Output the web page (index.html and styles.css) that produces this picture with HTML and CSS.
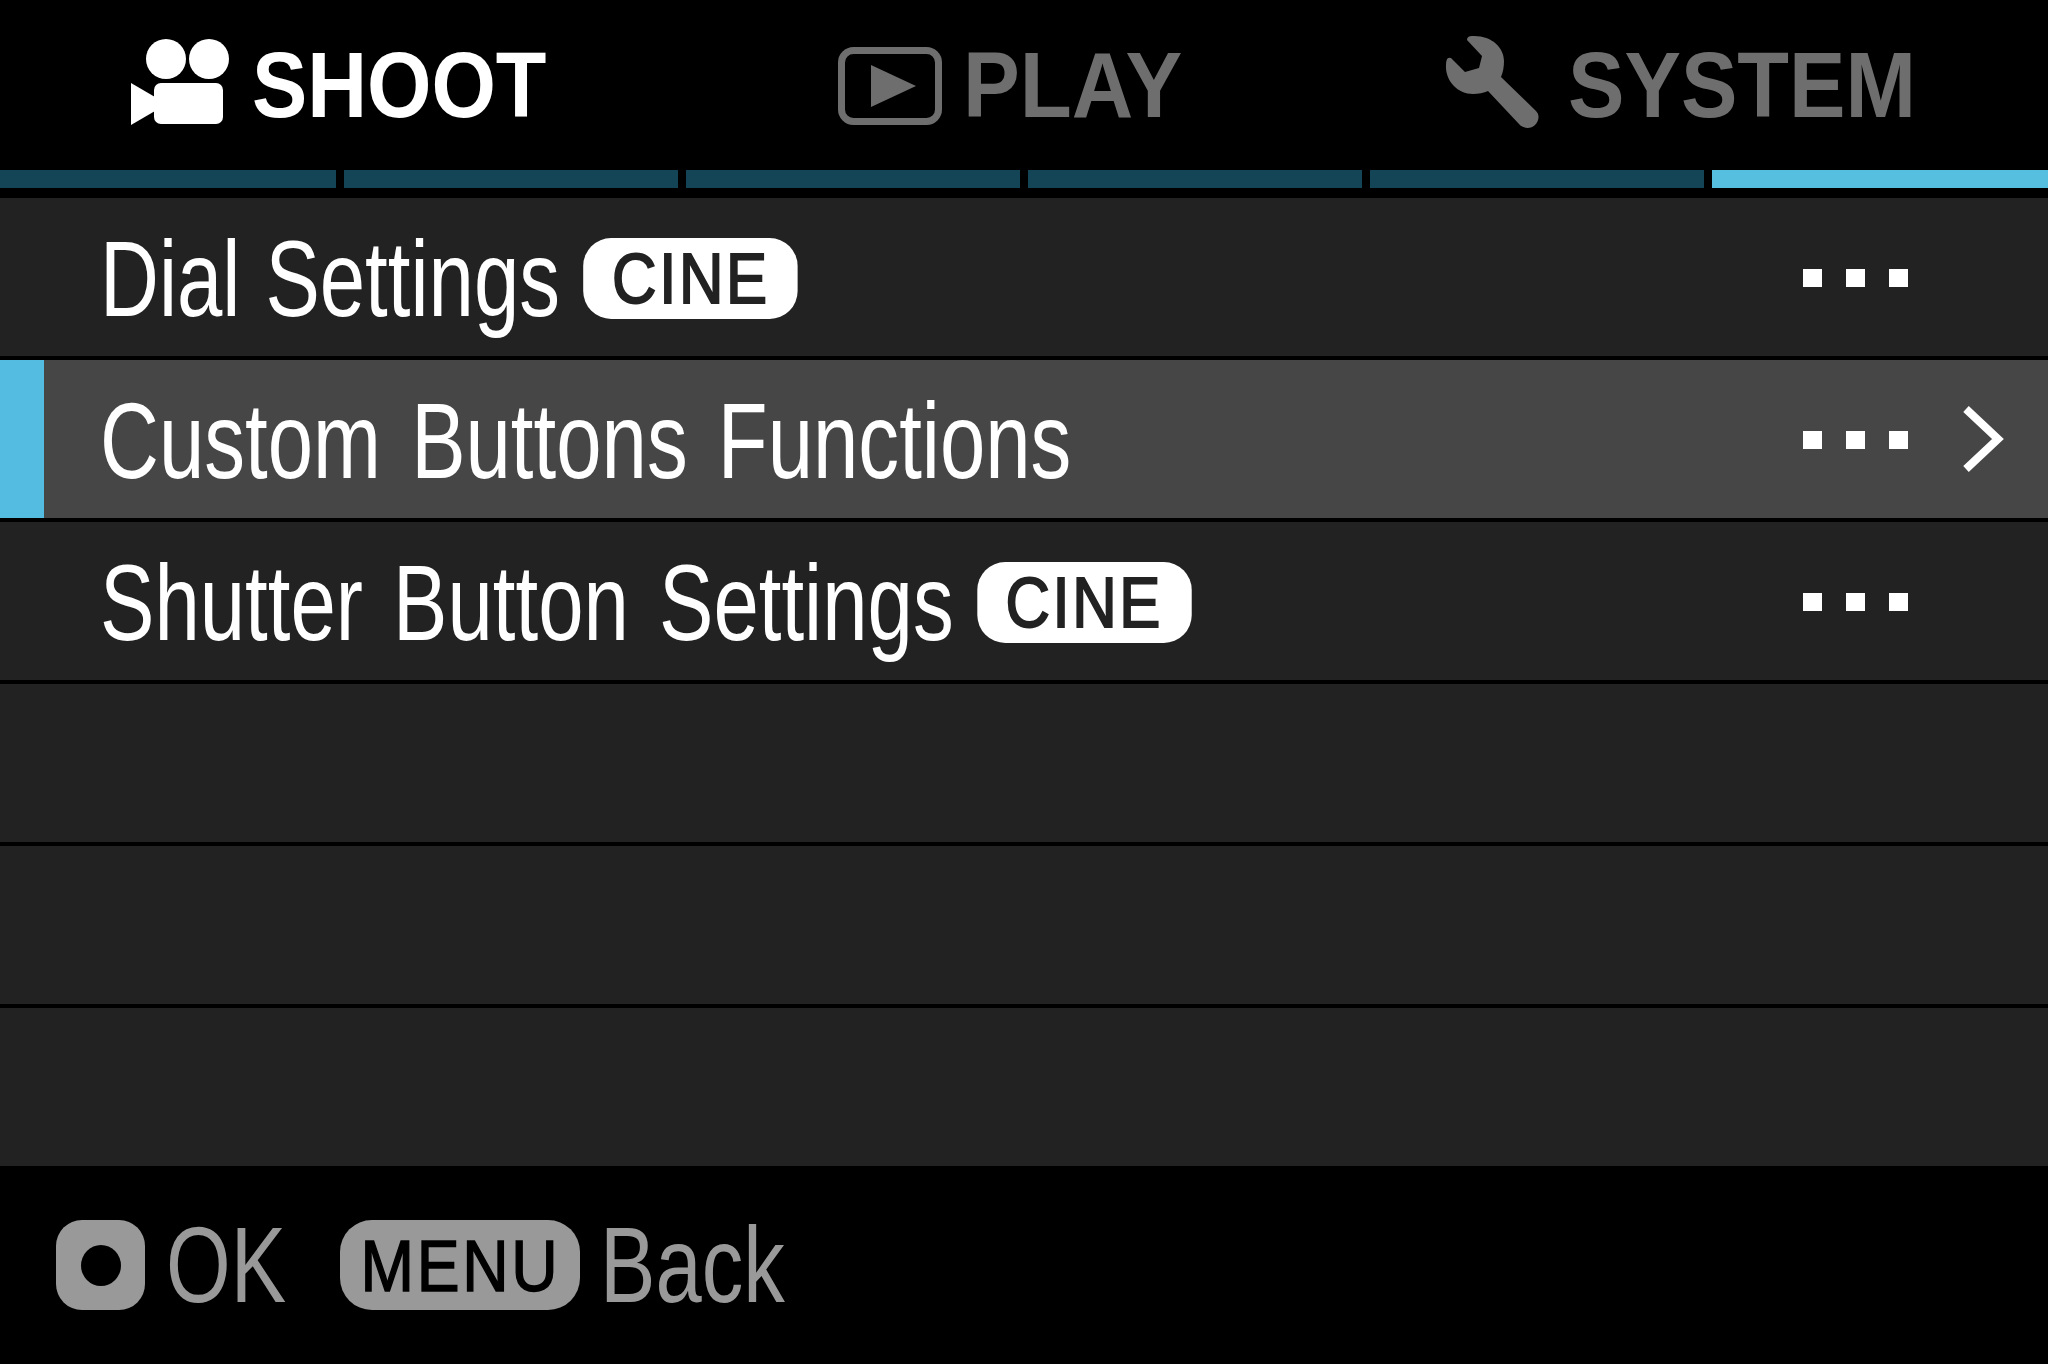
FILE: index.html
```html
<!DOCTYPE html>
<html lang="en">
<head>
    <meta charset="UTF-8">
    <title>Camera menu</title>
    <link rel="stylesheet" href="styles.css">
</head>
<body>
<div class="screen">
    <header class="tabs">
        <div class="tab tab-on">
            <svg class="icon-camera" viewBox="0 0 98 90">
                <ellipse cx="35" cy="21" rx="20" ry="20"/>
                <ellipse cx="78" cy="21" rx="20" ry="20"/>
                <rect x="23" y="45" width="69" height="41" rx="7"/>
                <path d="M0 45 L24 59 V73 L0 87 Z"/>
            </svg>
            <span class="tab-label label-shoot">SHOOT</span>
        </div>
        <div class="tab">
            <svg class="icon-play" viewBox="0 0 104 78">
                <rect x="3.5" y="3.5" width="97" height="71" rx="12"/>
                <path class="play-arrow" d="M33 18 L78 39 L33 60 Z"/>
            </svg>
            <span class="tab-label label-play">PLAY</span>
        </div>
        <div class="tab">
            <svg class="icon-wrench" viewBox="0 0 96 95">
                <path d="M22 5 Q22 1 27 1 C46 0 59 12 59 26 C59 32 58 37 56 42 L91 76 C95 80 94 86 90 90 C86 94 78 94 74 89 L43 56 C39 58 33 59 28 59 C12 59 0 45 1 30 Q1 21 6 23 L20 37 L34 33 L37 21 Z"/>
            </svg>
            <span class="tab-label label-system">SYSTEM</span>
        </div>
    </header>

    <div class="pages">
        <span></span><span></span><span></span><span></span><span></span><span class="page-on"></span>
    </div>

    <main class="list">
        <div class="row">
            <div class="row-name row-name-short">Dial Settings<span class="tag"><span>CINE</span></span></div>
            <div class="dots"><i></i><i></i><i></i></div>
        </div>
        <div class="row row-on">
            <div class="row-name">Custom Buttons Functions</div>
            <div class="dots"><i></i><i></i><i></i></div>
            <svg class="chevron" viewBox="0 0 44 72"><polyline points="5,6 37,36 5,66"/></svg>
        </div>
        <div class="row">
            <div class="row-name">Shutter Button Settings<span class="tag"><span>CINE</span></span></div>
            <div class="dots"><i></i><i></i><i></i></div>
        </div>
        <div class="row"></div>
        <div class="row"></div>
        <div class="row"></div>
    </main>

    <footer class="hints">
        <span class="key-ok"><i></i></span>
        <span class="hint hint-ok">OK</span>
        <span class="key-menu"><span>MENU</span></span>
        <span class="hint hint-back">Back</span>
    </footer>
</div>
</body>
</html>
```

FILE: styles.css
```css
* {
    box-sizing: border-box;
    padding: 0;
    margin: 0;
}

body {
    background: black;
    font-family: "Liberation Sans", Arial, sans-serif;
    overflow: hidden;
}

.screen {
    display: flex;
    flex-direction: column;
    height: 1364px;
    color: white;
}

/* top tabs */
.tabs {
    display: grid;
    grid-template-columns: repeat(3, 670.5px);
    padding-left: 3px;
    height: 170px;
    flex: none;
}

.tab {
    display: flex;
    align-items: center;
    justify-content: center;
    color: #6e6e6e;
    fill: #6e6e6e;
}

.tab-on {
    color: white;
    fill: white;
}

.tab-label {
    display: block;
    font-size: 92px;
    font-weight: bold;
    line-height: 1;
    white-space: nowrap;
    transform-origin: left center;
}

.label-shoot {
    width: 294px;
    margin-left: 23px;
    transform: scaleX(0.9);
}

.label-play {
    width: 217px;
    margin-left: 21px;
    transform: scaleX(0.926);
}

.label-system {
    width: 345px;
    margin-left: 27px;
    transform: scaleX(0.92);
}

.icon-camera {
    width: 98px;
    height: 90px;
    margin-top: -5px;
}

.icon-play {
    width: 104px;
    height: 78px;
    margin-top: 1px;
}

.icon-play rect {
    fill: none;
    stroke: #6e6e6e;
    stroke-width: 7;
}

.icon-wrench {
    width: 96px;
    height: 95px;
    margin-top: -6px;
}

/* page markers */
.pages {
    display: grid;
    grid-template-columns: 336px repeat(4, 1fr) 336px;
    gap: 8px;
    height: 18px;
    margin-bottom: 10px;
    flex: none;
}

.pages span {
    background: #134557;
}

.pages .page-on {
    background: #56bfdf;
}

/* menu rows */
.list {
    display: flex;
    flex-direction: column;
    gap: 4px;
    flex: none;
}

.row {
    display: grid;
    grid-template-columns: 1fr auto 140px;
    align-items: center;
    height: 158px;
    padding-left: 100px;
    background: #222222;
}

.row-on {
    padding-left: 56px;
    border-left: 44px solid #53bce0;
    background: #464646;
}

.row-name {
    display: flex;
    align-items: center;
    padding-top: 3px;
    font-size: 108px;
    line-height: 1;
    word-spacing: 10px;
    white-space: pre;
    transform: scaleX(0.755);
    transform-origin: left center;
}

.row-name-short {
    word-spacing: 3px;
}

.tag {
    display: flex;
    align-items: center;
    justify-content: center;
    width: 284px;
    height: 81px;
    margin-left: 31px;
    border-radius: 37px / 28px;
    background: white;
    color: #222222;
    font-size: 70px;
    letter-spacing: 3px;
    -webkit-text-stroke: 2px #222222;
}

.tag span {
    transform: scaleX(1.165);
}

.dots {
    display: flex;
    gap: 24px;
    grid-column: 2;
    margin-top: 2px;
}

.dots i {
    display: block;
    width: 19px;
    height: 18px;
    background: white;
}

.chevron {
    width: 44px;
    height: 72px;
    margin-left: 53px;
    fill: none;
    stroke: white;
    stroke-width: 8;
}

/* bottom hints */
.hints {
    display: flex;
    align-items: center;
    flex: 1;
    padding-left: 56px;
    color: #999999;
}

.key-ok {
    display: flex;
    align-items: center;
    justify-content: center;
    width: 89px;
    height: 90px;
    border-radius: 26px;
    background: #999999;
}

.key-ok i {
    display: block;
    width: 40px;
    height: 41px;
    border-radius: 50%;
    background: black;
}

.hint {
    display: block;
    font-size: 108px;
    line-height: 1;
    white-space: nowrap;
    transform: scaleX(0.77);
    transform-origin: left center;
}

.hint-ok {
    width: 121px;
    margin-left: 21px;
}

.hint-back {
    width: 177px;
    margin-left: 20px;
}

.key-menu {
    display: flex;
    align-items: center;
    justify-content: center;
    width: 240px;
    height: 90px;
    margin-left: 53px;
    border-radius: 32px;
    background: #999999;
    color: black;
    font-size: 73px;
    letter-spacing: 3px;
    -webkit-text-stroke: 1.5px black;
}

.key-menu span {
    transform: scaleX(0.88);
}
```
